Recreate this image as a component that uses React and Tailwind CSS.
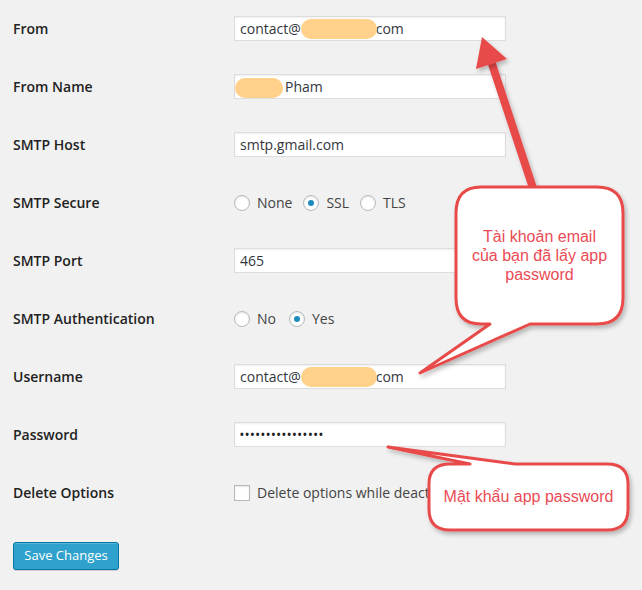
import React from "react";

const Blob = ({ w }) => (
  <span
    className="inline-block h-[20px] rounded-[10px] bg-[#ffd18a] align-middle blur-[0.6px]"
    style={{ width: w }}
  />
);

const Field = ({ children }) => (
  <div className="flex h-[25px] w-[272px] items-center border border-[#dddddd] bg-white px-[5px] text-[14px] text-[#32373c] shadow-[inset_0_1px_2px_rgba(0,0,0,0.07)]">
    {children}
  </div>
);

const Radio = ({ checked, label }) => (
  <label className="flex items-center gap-[7px] text-[14px] text-[#444]">
    <span className="flex h-[16px] w-[16px] items-center justify-center rounded-full border border-[#b4b9be] bg-white shadow-[inset_0_1px_2px_rgba(0,0,0,0.1)]">
      {checked && <span className="h-[6px] w-[6px] rounded-full bg-[#1e8cbe]" />}
    </span>
    {label}
  </label>
);

const Row = ({ label, children }) => (
  <div className="flex h-[58px] items-center pb-[1px]">
    <div className="w-[221px] text-[14px] font-semibold text-[#222]">{label}</div>
    <div className="flex items-center">{children}</div>
  </div>
);

const Overlay = () => (
  <div className="pointer-events-none absolute inset-0">
    <svg width="642" height="590" className="absolute left-0 top-0">
      <defs>
        <filter id="sh" x="-10%" y="-10%" width="130%" height="130%">
          <feDropShadow dx="2" dy="3" stdDeviation="2" floodColor="#000" floodOpacity="0.25" />
        </filter>
      </defs>
      <line x1="532" y1="185" x2="492" y2="64" stroke="#e84a4a" strokeWidth="8" strokeLinecap="round" filter="url(#sh)" />
      <polygon points="482,37 476,69 507,59" fill="#e84a4a" filter="url(#sh)" />
      <path
        d="M 481 187 H 597 Q 623 187 623 213 V 298 Q 623 324 597 324 H 530 L 420 373 L 490 324 H 481 Q 456 324 456 298 V 213 Q 456 187 481 187 Z"
        fill="#fff"
        stroke="#e84a4a"
        strokeWidth="3"
        strokeLinejoin="round"
        filter="url(#sh)"
      />
      <path
        d="M 450 464 H 470 L 388 447 L 515 464 H 607 Q 628 464 628 484 V 509 Q 628 530 607 530 H 450 Q 429 530 429 509 V 484 Q 429 464 450 464 Z"
        fill="#fff"
        stroke="#e84a4a"
        strokeWidth="3"
        strokeLinejoin="round"
        filter="url(#sh)"
      />
    </svg>
    <div className="absolute left-[456px] top-[227px] w-[167px] text-center font-['Liberation_Sans',Arial,sans-serif] text-[16px] leading-[19px] text-[#ea4b55]">
      Tài khoản email
      <br />
      của bạn đã lấy app
      <br />
      password
    </div>
    <div className="absolute left-[429px] top-[487px] w-[199px] text-center font-['Liberation_Sans',Arial,sans-serif] text-[16px] leading-[19px] text-[#ea4b55]">
      Mật khẩu app password
    </div>
  </div>
);

export default function App() {
  return (
    <div className="relative h-[590px] w-[642px] overflow-hidden bg-[#f1f1f1] font-['Open_Sans','Noto_Sans',sans-serif]">
      <div className="flex flex-col pl-[13px]">
        <Row label="From">
          <Field>
            contact@<Blob w={76} />
            <span className="-ml-[1px]">com</span>
          </Field>
        </Row>
        <Row label="From Name">
          <Field>
            <span className="-ml-[5px] mr-[2px]">
              <Blob w={48} />
            </span>
            Pham
          </Field>
        </Row>
        <Row label="SMTP Host">
          <Field>smtp.gmail.com</Field>
        </Row>
        <Row label="SMTP Secure">
          <div className="flex items-center gap-[11px]">
            <Radio label="None" />
            <Radio checked label="SSL" />
            <Radio label="TLS" />
          </div>
        </Row>
        <Row label="SMTP Port">
          <Field>465</Field>
        </Row>
        <Row label="SMTP Authentication">
          <div className="flex items-center gap-[13px]">
            <Radio label="No" />
            <Radio checked label="Yes" />
          </div>
        </Row>
        <Row label="Username">
          <Field>
            contact@<Blob w={76} />
            <span className="-ml-[1px]">com</span>
          </Field>
        </Row>
        <Row label="Password">
          <Field>
            <span className="text-[10px] font-bold tracking-[1.5px] text-[#222]">••••••••••••••••</span>
          </Field>
        </Row>
        <Row label="Delete Options">
          <label className="flex items-center gap-[7px] whitespace-nowrap text-[14px] text-[#444]">
            <span className="h-[16px] w-[16px] shrink-0 border border-[#b4b9be] bg-white shadow-[inset_0_1px_2px_rgba(0,0,0,0.1)]" />
            <span className="w-[171px] overflow-hidden">Delete options while deactivate this plugin.</span>
          </label>
        </Row>
        <div className="mt-[20px]">
          <button className="h-[28px] w-[106px] rounded-[3px] border border-[#0074a2] bg-[#2ea2cc] text-[13px] text-white shadow-[inset_0_1px_0_rgba(120,200,230,0.5),0_1px_0_rgba(0,0,0,0.15)]">
            Save Changes
          </button>
        </div>
      </div>
      <Overlay />
    </div>
  );
}
